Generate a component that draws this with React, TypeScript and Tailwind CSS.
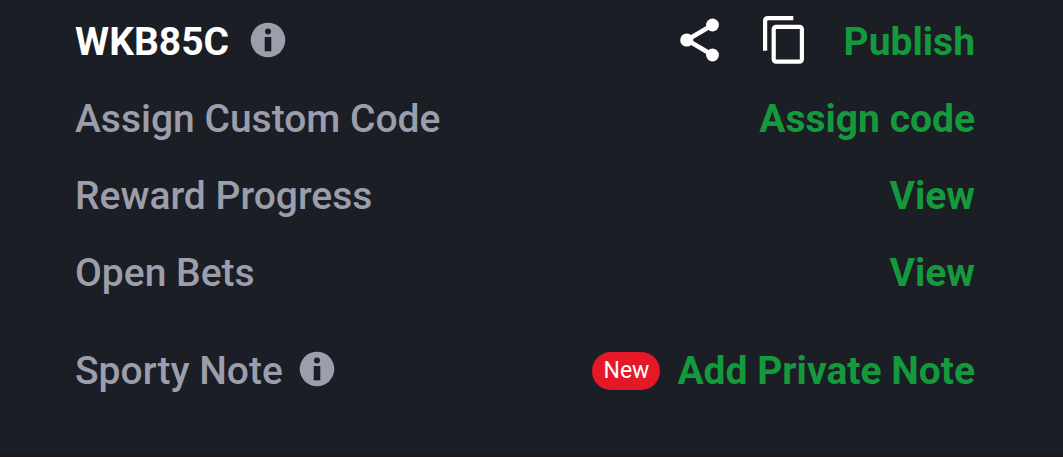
import type { ReactNode } from "react";

function IconButton({
    label,
    children,
}: {
    label: string;
    children: ReactNode;
}) {
    return (
        <button type="button" aria-label={label} className="shrink-0 pb-1">
            {children}
        </button>
    );
}

function InfoButton({ label }: { label: string }) {
    return (
        <IconButton label={label}>
            <svg viewBox="0 0 36 36" className="h-9 w-9">
                <circle cx="18" cy="18" r="17.3" fill="#9c9eab" />
                <circle cx="18" cy="9.5" r="3" fill="#1b1e25" />
                <rect x="14.7" y="15" width="6.6" height="14.3" fill="#1b1e25" />
            </svg>
        </IconButton>
    );
}

function Row({ children }: { children: ReactNode }) {
    return (
        <div className="flex h-12 items-center justify-between">{children}</div>
    );
}

function Action({ children }: { children: ReactNode }) {
    return (
        <button type="button" className="font-bold text-[#149a3c]">
            {children}
        </button>
    );
}

export default function App() {
    return (
        <main className="min-h-screen border-b-2 border-[#1b181c] bg-[#1b1e25] pt-[18px] pr-[88px] pl-[75px] font-['Roboto',sans-serif] text-[39px] leading-[48px] font-medium text-[#9c9eab]">
            <Row>
                <div className="flex items-center gap-[21px]">
                    <h1 className="font-bold text-white">WKB85C</h1>
                    <InfoButton label="About this code" />
                </div>
                <div className="flex items-center gap-10">
                    <IconButton label="Share">
                        <svg viewBox="0 0 42 44" className="h-11 w-[42px]">
                            <path
                                d="M32.5 7 7 22l25.5 15"
                                fill="none"
                                stroke="#fff"
                                strokeWidth="4.6"
                            />
                            <g fill="#fff">
                                <circle cx="32.5" cy="7" r="6.4" />
                                <circle cx="6.8" cy="22" r="6.6" />
                                <circle cx="32.5" cy="37" r="6.4" />
                            </g>
                        </svg>
                    </IconButton>
                    <IconButton label="Copy">
                        <svg
                            viewBox="0 0 42 48"
                            className="h-12 w-[42px]"
                            fill="none"
                            stroke="#fff"
                            strokeWidth="4.2"
                        >
                            <path d="M3.1 34.7V5.1q0-3 3-3h25.2" />
                            <rect
                                x="11.7"
                                y="10.9"
                                width="28.2"
                                height="34.8"
                                rx="2.4"
                            />
                        </svg>
                    </IconButton>
                    <Action>Publish</Action>
                </div>
            </Row>
            <div className="mt-[29px] space-y-[29px]">
                <Row>
                    <span>Assign Custom Code</span>
                    <Action>Assign code</Action>
                </Row>
                <Row>
                    <span>Reward Progress</span>
                    <Action>View</Action>
                </Row>
                <Row>
                    <span>Open Bets</span>
                    <Action>View</Action>
                </Row>
            </div>
            <div className="mt-[50px]">
                <Row>
                    <div className="flex items-center gap-4">
                        <span>Sporty Note</span>
                        <InfoButton label="About Sporty Note" />
                    </div>
                    <div className="flex items-center gap-[17px]">
                        <span className="rounded-full bg-[#e41827] px-[11px] text-[23px] leading-[38px] font-normal text-white">
                            New
                        </span>
                        <Action>Add Private Note</Action>
                    </div>
                </Row>
            </div>
        </main>
    );
}
